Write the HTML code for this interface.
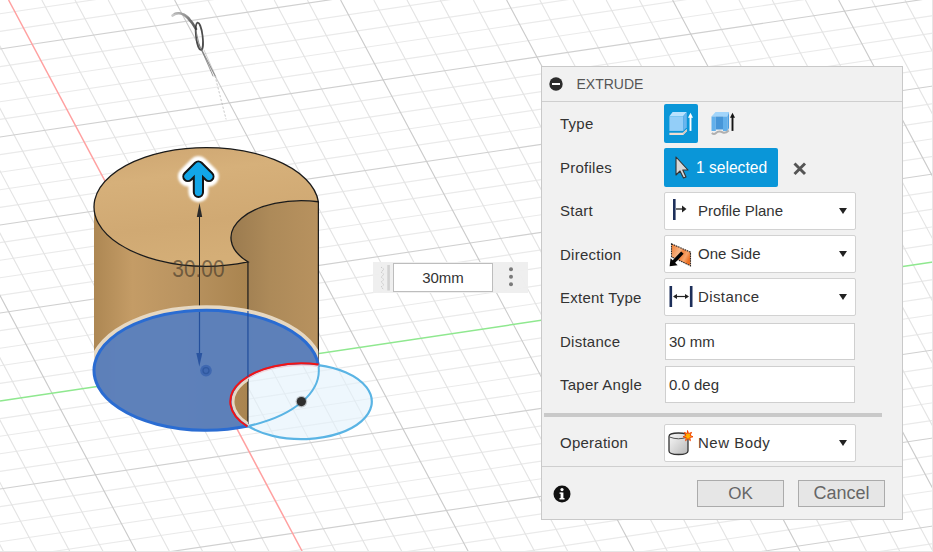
<!DOCTYPE html><html><head><meta charset="utf-8"><style>
*{margin:0;padding:0;box-sizing:border-box}
html,body{width:933px;height:552px;overflow:hidden;background:#fff;font-family:"Liberation Sans",sans-serif}
.abs{position:absolute}
#flt{left:373px;top:262px;width:155px;height:31px;background:rgba(238,238,238,0.95)}
#flt .inp{position:absolute;left:20px;top:1px;width:100px;height:29px;background:#fff;border:1px solid #bdbdbd;font-size:15px;color:#333;text-align:center;line-height:28px}
#dlg{left:541px;top:66px;width:362px;height:454px;background:#f1f1f1;border:1px solid #c9c9c9}
#dlg .hdr{position:absolute;left:0;top:0;width:360px;height:35px;border-bottom:1px solid #cfcfcf}
.lbl{position:absolute;left:18px;font-size:15px;color:#333;letter-spacing:0.25px}
.dd{position:absolute;left:122px;width:192px;height:38px;background:#fff;border:1px solid #d2d2d2;border-radius:2px}
.dd .t{position:absolute;left:33px;top:0;line-height:36px;font-size:15px;color:#333}
.dd .arr{position:absolute;right:8px;top:15px;width:0;height:0;border-left:4.5px solid transparent;border-right:4.5px solid transparent;border-top:6px solid #222}
.inp2{position:absolute;left:123px;width:190px;height:37px;background:#fff;border:1px solid #cfcfcf}
.inp2 .t{position:absolute;left:3px;top:0;line-height:35px;font-size:15px;color:#333}
.btn{position:absolute;top:413px;width:87px;height:27px;background:#e6e6e6;border:1px solid #ababab;font-size:17px;color:#666;text-align:center;line-height:25px}
</style></head><body>
<svg width="933" height="552" viewBox="0 0 933 552" style="position:absolute;left:0;top:0">
<defs>
<linearGradient id="gTop" x1="0" y1="0" x2="0.25" y2="1">
<stop offset="0" stop-color="#cda571"/><stop offset="0.3" stop-color="#d6b07a"/><stop offset="0.7" stop-color="#d0a973"/><stop offset="1" stop-color="#d4ae77"/></linearGradient>
<linearGradient id="gSide" x1="0" y1="0" x2="1" y2="0">
<stop offset="0" stop-color="#ad8753"/><stop offset="0.25" stop-color="#c49c66"/><stop offset="0.6" stop-color="#b99360"/><stop offset="1" stop-color="#a9844f"/></linearGradient>
<linearGradient id="gIn" x1="0" y1="0" x2="1" y2="0">
<stop offset="0" stop-color="#9b7b4f"/><stop offset="0.45" stop-color="#ad8a59"/><stop offset="1" stop-color="#b8925f"/></linearGradient>
<clipPath id="cylclip"><path d="M94.0 206.85L94.0 370.3A112.4 60.00 0 0 0 247.94 426.05L247.94 261.91A112.4 59.25 0 0 1 94.0 206.85Z"/><path d="M231.00 237.76A70.4 37.11 0 0 1 318.38 201.74L318.38 365.13A70.4 37.58 0 0 0 231.00 401.60Z"/></clipPath>
<filter id="gblur" x="0" y="0" width="933" height="552" filterUnits="userSpaceOnUse"><feGaussianBlur stdDeviation="0.55"/></filter>
<filter id="blur1" x="-50" y="130" width="100" height="90" filterUnits="userSpaceOnUse"><feGaussianBlur stdDeviation="0.9"/></filter>
</defs>
<rect width="933" height="552" fill="#ffffff"/>
<g filter="url(#gblur)"><path d="M0.00 13.80L933.00 -125.22M0.00 31.40L933.00 -107.62M0.00 66.60L933.00 -72.42M0.00 84.20L933.00 -54.82M0.00 101.80L933.00 -37.22M0.00 119.40L933.00 -19.62M0.00 154.60L933.00 15.58M0.00 172.20L933.00 33.18M0.00 189.80L933.00 50.78M0.00 207.40L933.00 68.38M0.00 242.60L933.00 103.58M0.00 260.20L933.00 121.18M0.00 277.80L933.00 138.78M0.00 295.40L933.00 156.38M0.00 330.60L933.00 191.58M0.00 348.20L933.00 209.18M0.00 365.80L933.00 226.78M0.00 383.40L933.00 244.38M0.00 418.60L933.00 279.58M0.00 436.20L933.00 297.18M0.00 453.80L933.00 314.78M0.00 471.40L933.00 332.38M0.00 506.60L933.00 367.58M0.00 524.20L933.00 385.18M0.00 541.80L933.00 402.78M0.00 559.40L933.00 420.38M0.00 594.60L933.00 455.58M0.00 612.20L933.00 473.18M0.00 629.80L933.00 490.78M0.00 647.40L933.00 508.38M0.00 682.60L933.00 543.58" stroke="#eaeaea" stroke-width="1.15" fill="none"/><path d="M-290.20 0.00L3.74 552.00M-257.00 0.00L36.94 552.00M-223.80 0.00L70.14 552.00M-190.60 0.00L103.34 552.00M-124.20 0.00L169.74 552.00M-91.00 0.00L202.94 552.00M-57.80 0.00L236.14 552.00M-24.60 0.00L269.34 552.00M41.80 0.00L335.74 552.00M75.00 0.00L368.94 552.00M108.20 0.00L402.14 552.00M141.40 0.00L435.34 552.00M207.80 0.00L501.74 552.00M241.00 0.00L534.94 552.00M274.20 0.00L568.14 552.00M307.40 0.00L601.34 552.00M373.80 0.00L667.74 552.00M407.00 0.00L700.94 552.00M440.20 0.00L734.14 552.00M473.40 0.00L767.34 552.00M539.80 0.00L833.74 552.00M573.00 0.00L866.94 552.00M606.20 0.00L900.14 552.00M639.40 0.00L933.34 552.00M705.80 0.00L999.74 552.00M739.00 0.00L1032.94 552.00M772.20 0.00L1066.14 552.00M805.40 0.00L1099.34 552.00M871.80 0.00L1165.74 552.00M905.00 0.00L1198.94 552.00" stroke="#e4e4e4" stroke-width="1.15" fill="none"/>
<path d="M0.00 49.00L933.00 -90.02M0.00 137.00L933.00 -2.02M0.00 225.00L933.00 85.98M0.00 313.00L933.00 173.98M0.00 489.00L933.00 349.98M0.00 577.00L933.00 437.98M0.00 665.00L933.00 525.98" stroke="#d0d0d0" stroke-width="1.15" fill="none"/><path d="M-157.40 0.00L136.54 552.00M174.60 0.00L468.54 552.00M340.60 0.00L634.54 552.00M506.60 0.00L800.54 552.00M672.60 0.00L966.54 552.00M838.60 0.00L1132.54 552.00" stroke="#cbcbcb" stroke-width="1.15" fill="none"/></g>
<path d="M8.60 0.00L302.54 552.00" stroke="#ffa0a0" stroke-width="1.5" fill="none" filter="url(#gblur)"/>
<path d="M0.00 401.00L933.00 261.98" stroke="#8fe88f" stroke-width="1.5" fill="none" filter="url(#gblur)"/>
<g fill="none" stroke-linecap="round">
<linearGradient id="swg" x1="0" y1="0" x2="1" y2="0.3"><stop offset="0" stop-color="#c8c8c8"/><stop offset="1" stop-color="#505050"/></linearGradient>
<path d="M172.5 15.5 C177 12, 183 13, 188 18 C 191 21, 194 25, 196 29" stroke="url(#swg)" stroke-width="2.6" opacity="0.9"/>
<path d="M174 13.5 C179 11.5, 185 13, 190 18" stroke="#999" stroke-width="1" opacity="0.6"/>
<ellipse cx="199.3" cy="36.3" rx="3.3" ry="13.8" stroke-width="1.7" stroke="#3a3a3a" transform="rotate(-7 199.3 36.3)" opacity="0.9"/>
<path d="M196 31 L199.5 46" stroke="#777" stroke-width="1" opacity="0.8"/>
<path d="M201.5 49 L215 75.5 M199 44 L213 76" stroke="#666" stroke-width="0.9" opacity="0.75"/>
<path d="M204 50 L216 77" stroke="#999" stroke-width="0.8" opacity="0.6"/>
<path d="M215 76 L226 119" stroke="#aaa" stroke-width="0.8" stroke-dasharray="1.5 2.5" opacity="0.8"/>
</g>
<ellipse cx="301.4" cy="401.6" rx="70.4" ry="37.58" fill="#e2f1fc" fill-opacity="0.6"/>
<path d="M231.00 237.76A70.4 37.11 0 0 1 318.38 201.74L318.38 365.13A70.4 37.58 0 0 0 231.00 401.60Z" fill="url(#gIn)"/>
<path d="M94.0 206.85L94.0 370.3A112.4 60.00 0 0 0 247.94 426.05L247.94 261.91A112.4 59.25 0 0 1 94.0 206.85Z" fill="url(#gSide)"/>
<path d="M318.38 201.74A112.4 59.25 0 1 0 247.94 261.91A70.4 37.11 0 0 1 318.38 201.74Z" fill="url(#gTop)"/>
<path d="M318.38 201.74A112.4 59.25 0 1 0 247.94 261.91A70.4 37.11 0 0 1 318.38 201.74Z" fill="none" stroke="#1a1a1a" stroke-width="1.3"/>
<path d="M318.38 201.74L318.38 365.13M247.94 261.91L247.94 426.05" stroke="#1a1a1a" stroke-width="1.2"/>
<path d="M199.5 212 L199.5 362" stroke="#222" stroke-width="1"/>
<path d="M199.5 203 L196.8 217 L202.2 217Z" fill="#2a2a2a"/>
<path d="M199.5 367.5 L196.8 353 L202.2 353Z" fill="#2a2a2a"/>
<text x="0" y="0" transform="translate(198.4 276.9) scale(0.87 1)" font-family="Liberation Sans" font-size="24" fill="#3d3427" fill-opacity="0.62" text-anchor="middle">30.00</text>
<path d="M91.4 370.3A115.0 62.60 0 0 1 321.40000000000003 370.3" fill="none" stroke="#e6d8c2" stroke-width="5.2" clip-path="url(#cylclip)"/>
<path d="M318.38 365.13A112.4 60.00 0 1 0 247.94 426.05A70.4 37.58 0 0 1 318.38 365.13Z" fill="#5880bf" fill-opacity="0.95"/>
<path d="M318.38 365.13A112.4 60.00 0 1 0 247.94 426.05A70.4 37.58 0 0 1 318.38 365.13Z" fill="none" stroke="#2a6cd2" stroke-width="3"/>
<path d="M318.38 365.13A70.4 37.58 0 1 1 247.94 426.05" fill="none" stroke="#5ab4e4" stroke-width="2.2"/>
<path d="M318.38 365.13A112.4 60.00 0 0 1 247.94 426.05" fill="none" stroke="#5ab4e4" stroke-width="2"/>
<clipPath id="leftcut"><rect x="0" y="0" width="247.94" height="552"/></clipPath><clipPath id="rightcut"><rect x="247.94" y="0" width="400" height="552"/></clipPath>
<path d="M249.46 424.75A68.4 35.58 0 0 1 317.90 367.07" fill="none" stroke="#eadcc8" stroke-width="3" opacity="0.95" clip-path="url(#leftcut)"/>
<path d="M248.85 425.27A69.2 36.38 0 0 1 318.09 366.29" fill="none" stroke="#ffd9d9" stroke-width="1.6" opacity="0.9" clip-path="url(#rightcut)"/>
<path d="M247.41 426.51A71.10000000000001 38.28 0 0 1 318.55 364.45" fill="none" stroke="#f41414" stroke-width="2"/>
<path d="M199.5 312 L199.5 357 M247.94 311 L247.94 377" stroke="#244f9c" stroke-width="1.2"/>
<path d="M199.3 366.5 L196.3 353 L202.3 353Z" fill="#2a54a0"/>
<circle cx="206" cy="370.6" r="5.8" fill="#3d66b0" opacity="0.95"/>
<circle cx="206" cy="370.6" r="3" fill="none" stroke="#3059a0" stroke-width="1.3"/>
<circle cx="301.4" cy="401.6" r="5.8" fill="#555" opacity="0.35"/>
<circle cx="301.4" cy="401.6" r="4.6" fill="#2e2e2e"/>
<g transform="translate(198.4 0)" stroke-linecap="round" stroke-linejoin="round" fill="none">
<path d="M0 192.3 L0 167 M-10.5 176.5 L0 166 L10.5 176.5" stroke="#fff" stroke-width="20" opacity="1" filter="url(#blur1)"/>
<path d="M0 192.3 L0 167 M-10.5 176.5 L0 166 L10.5 176.5" stroke="#151515" stroke-width="11.2"/>
<path d="M0 192.3 L0 167 M-10.5 176.5 L0 166 L10.5 176.5" stroke="#12a6e8" stroke-width="7.2"/>
</g>
<path d="M0 551.5 L933 551.5 M932.5 0 L932.5 552" stroke="#e6e6e6" stroke-width="1"/>
</svg>
<div id="flt" class="abs">
<svg class="abs" style="left:0;top:0" width="20" height="31"><path d="M8 5 L11 7.5 L8 10 L11 12.5 L8 15 L11 17.5 L8 20 L11 22.5 L8 25 L11 27.5" stroke="#c4c4c4" fill="none" stroke-width="0.9" stroke-dasharray="1.5 1"/><rect x="14.3" y="3" width="2.6" height="25.5" fill="#d2d2d2"/></svg>
<div class="inp">30mm</div>
<svg class="abs" style="left:134px;top:4px" width="8" height="26"><circle cx="4" cy="3.2" r="2" fill="#7a7a7a"/><circle cx="4" cy="10.8" r="2" fill="#7a7a7a"/><circle cx="4" cy="18.3" r="2" fill="#7a7a7a"/></svg>
</div>
<div id="dlg" class="abs">
<div class="hdr">
<svg class="abs" style="left:6.7px;top:9.6px" width="14" height="14"><circle cx="7" cy="7" r="6.7" fill="#2b2b2b"/><rect x="3" y="6" width="8" height="2" fill="#fff"/></svg>
<div class="abs" style="left:34.5px;top:8.5px;font-size:14px;color:#555;letter-spacing:0px">EXTRUDE</div>
</div>
<div class="lbl" style="top:47.5px">Type</div>
<div class="abs" style="left:122px;top:37px;width:34px;height:39px;background:#0a96d8;border-radius:2px"></div>
<svg class="abs" style="left:127px;top:44px" width="26" height="28">
<path d="M0.4 5.3 L14.2 5.3 L14.2 19.9 L0.4 19.9Z" fill="#93cef8"/>
<path d="M0.4 5.3 L3.6 1 L17.8 1 L14.2 5.3Z" fill="#b9e1fd"/>
<path d="M14.2 5.3 L17.8 1 L17.8 16.3 L14.2 19.9Z" fill="#69b5ee"/>
<path d="M0.4 21.8 L13.8 21.8 L17.8 18 L17.8 20.2 L14.2 24.1 L0.4 24.1Z" fill="#f1ddd0"/>
<path d="M13.8 21.8 L17.8 18 L17.8 20.2 L14.2 24.1Z" fill="#cfc9c6"/>
<path d="M21.5 19.9 L21.5 5" stroke="#fff" stroke-width="1.9"/><path d="M21.5 1.8 L19 6.8 L24 6.8Z" fill="#fff"/>
</svg>
<svg class="abs" style="left:169px;top:44px" width="26" height="28">
<path d="M0.5 5.5 L4.5 1 L18 1 L16.5 5.5Z" fill="#a2d5fb"/>
<path d="M0.5 5.5 L4.8 5.5 L4.8 20 L0.5 20Z" fill="#62b0eb"/>
<path d="M4.8 5.5 L12 5.5 L12 18.5 L4.8 18.5Z" fill="#4796d8"/>
<path d="M12 5.5 L16.5 5.5 L16.5 20 L12 20Z" fill="#62b0eb"/>
<path d="M16.5 5.5 L18 1 L18 17 L16.5 20Z" fill="#4a9de0"/>
<path d="M0.8 22 Q3 24 5 22 Q7.5 19.5 12 21.5 Q14.5 22.5 17.8 19.5" stroke="#b0b0b0" stroke-width="2" fill="none"/>
<path d="M21.5 19.9 L21.5 5" stroke="#151515" stroke-width="1.9"/><path d="M21.5 1.8 L19 6.8 L24 6.8Z" fill="#151515"/>
</svg>
<div class="lbl" style="top:91.5px">Profiles</div>
<div class="abs" style="left:122px;top:80.5px;width:113.5px;height:39px;background:#0a96d8;border-radius:2px">
<svg class="abs" style="left:10px;top:8px" width="18" height="24"><path d="M2 1 L2 19 L6 15 L9.5 22 L12 21 L8.8 14 L14 14Z" fill="#d8d8d8" stroke="#333" stroke-width="1.1" stroke-linejoin="round"/></svg>
<div class="abs" style="left:32px;top:0;line-height:39px;font-size:15.6px;color:#fff">1 selected</div>
</div>
<svg class="abs" style="left:250px;top:94px" width="16" height="16"><path d="M2.5 2.5 L13 13 M13 2.5 L2.5 13" stroke="#555" stroke-width="2.9"/></svg>
<div class="lbl" style="top:134.5px">Start</div>
<div class="dd" style="top:124.5px"><svg class="abs" style="left:7px;top:5.5px" width="20" height="24"><rect x="1" y="1" width="2.6" height="21" fill="#1d2f5a"/><path d="M4 11 L13 11" stroke="#222" stroke-width="1.3"/><path d="M14.5 11 L10 7.5 L10 14.5Z" fill="#222"/></svg><div class="t">Profile Plane</div><div class="arr"></div></div>
<div class="lbl" style="top:178.5px">Direction</div>
<div class="dd" style="top:168px"><svg class="abs" style="left:4px;top:5.5px" width="26" height="26"><defs><linearGradient id="org" x1="0" y1="0" x2="1" y2="0.6"><stop offset="0" stop-color="#ee7a2e"/><stop offset="0.45" stop-color="#f9b585"/><stop offset="0.6" stop-color="#f08440"/><stop offset="0.8" stop-color="#f7a46a"/><stop offset="1" stop-color="#ec6f22"/></linearGradient></defs><path d="M2.5 1.8 L21.5 10.2 L21.5 23.8 L2.5 14.8Z" fill="url(#org)" stroke="#2a2a2a" stroke-width="1.1" stroke-dasharray="1.6 0.8"/><path d="M12.2 11.8 L4 20.5" stroke="#050505" stroke-width="3.4" stroke-linecap="square"/><path d="M0.6 24.2 L8.6 23.2 L1.6 16.2Z" fill="#050505"/></svg><div class="t">One Side</div><div class="arr"></div></div>
<div class="lbl" style="top:221.5px">Extent Type</div>
<div class="dd" style="top:211px"><svg class="abs" style="left:3.5px;top:5.7px" width="24" height="24"><rect x="0.5" y="1" width="2.6" height="21" fill="#1d2f5a"/><rect x="20.9" y="1" width="2.6" height="21" fill="#1d2f5a"/><path d="M5 11.5 L19 11.5" stroke="#222" stroke-width="1.2"/><path d="M4 11.5 L8 9 L8 14Z M20 11.5 L16 9 L16 14Z" fill="#222"/></svg><div class="t" style="letter-spacing:0.4px">Distance</div><div class="arr"></div></div>
<div class="lbl" style="top:265.5px">Distance</div>
<div class="inp2" style="top:256px"><div class="t">30 mm</div></div>
<div class="lbl" style="top:308.5px">Taper Angle</div>
<div class="inp2" style="top:299px"><div class="t">0.0 deg</div></div>
<div class="abs" style="left:2px;top:346px;width:338px;height:4px;background:#c9c9c9"></div>
<div class="lbl" style="top:366.5px">Operation</div>
<div class="dd" style="top:357px"><svg class="abs" style="left:2px;top:5px" width="28" height="28"><defs><linearGradient id="opg" x1="0" y1="0" x2="1" y2="1"><stop offset="0" stop-color="#fafafa"/><stop offset="1" stop-color="#b8b8b8"/></linearGradient></defs><path d="M2 6.5 Q2 3 11.5 3 Q21 3 21 6.5 L21 21 Q21 24.5 11.5 24.5 Q2 24.5 2 21Z" fill="url(#opg)" stroke="#333" stroke-width="1.3"/><path d="M2.5 7 Q11.5 10.5 20.5 7" fill="none" stroke="#555" stroke-width="1"/><path d="M20.5 0.5 L21.6 3.6 L24.6 2.4 L23 5.3 L26 6.8 L22.8 7.5 L23.4 10.7 L21 8.6 L18.6 10.7 L19.2 7.5 L16 6.8 L19 5.3 L17.4 2.4 L20.4 3.6Z" fill="#ffb000" stroke="#ee3a00" stroke-width="0.9"/></svg><div class="t" style="letter-spacing:0.5px">New Body</div><div class="arr"></div></div>
<div class="abs" style="left:0;top:399px;width:360px;height:1px;background:#cfcfcf"></div>
<svg class="abs" style="left:11px;top:418px" width="18" height="18"><circle cx="9" cy="9" r="8.5" fill="#111"/><rect x="7.6" y="7.5" width="2.8" height="6.5" fill="#fff"/><rect x="6.5" y="13" width="5" height="1.5" fill="#fff"/><rect x="6.5" y="7.5" width="2" height="1.3" fill="#fff"/><circle cx="9" cy="4.6" r="1.6" fill="#fff"/></svg>
<div class="btn" style="left:155px">OK</div>
<div class="btn" style="left:256px;font-size:18px">Cancel</div>
</div>
</body></html>
